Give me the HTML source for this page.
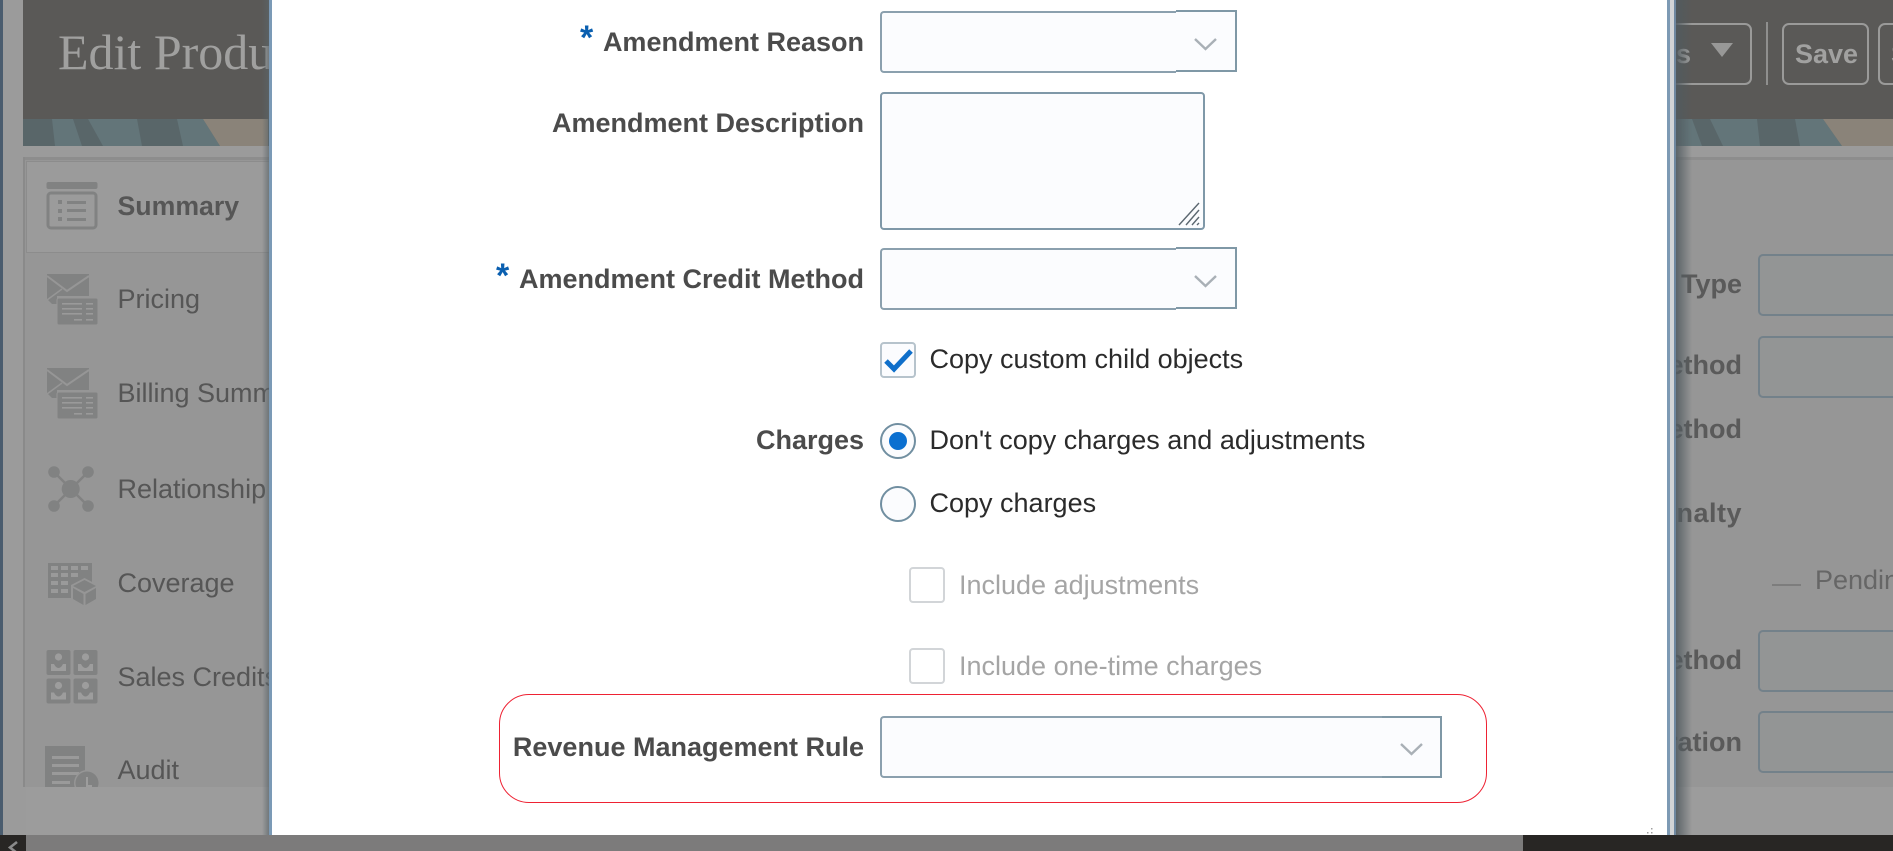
<!DOCTYPE html>
<html lang="en">
<head>
<meta charset="utf-8">
<title>Edit Product</title>
<style>
html,body{margin:0;padding:0}
body{width:1893px;height:851px;overflow:hidden;position:relative;background:#9b9b9b;font-family:"Liberation Sans",sans-serif}
.a{position:absolute}
.t{position:absolute;font-size:27px;line-height:30px;white-space:nowrap}
.b{font-weight:bold}
.r{text-align:right}
.nav{left:117.5px;color:#565656}
.bg{color:#5a5a5a;font-weight:bold;width:300px;left:1442px;text-align:right}
.fld{position:absolute;left:1758px;width:200px;height:58px;background:#939595;border:2px solid #73818a;border-radius:5px}
.btn{position:absolute;box-sizing:border-box;border:2px solid #9a9a99;border-radius:7px;height:62px;top:23px}
.l{color:#4b4b4b;font-weight:bold;text-align:right;left:364px;width:500px}
.v{color:#2b2b2b;left:929.5px}
.d{color:#a5a5a5;left:959px}
.sel{position:absolute;left:880px;box-sizing:border-box;height:62px;background:#fbfcfe;border:2px solid #8ba0ae;border-right:0;border-radius:4px 0 0 4px}
.trg{position:absolute;box-sizing:border-box;height:62px;background:#fbfcfe;border:2px solid #7f98a6;border-left:0}
.box{position:absolute;box-sizing:border-box;width:36px;height:36px;border-radius:4px}
.rad{position:absolute;box-sizing:border-box;width:36px;height:36px;left:880px;border-radius:50%;border:2px solid #718fa1;background:#fbfcfe}
.star{position:absolute;color:#0a5fb0;font-weight:bold;font-size:34px;line-height:34px}
</style>
</head>
<body>
<!-- page background -->
<div class="a" style="left:0;top:0;width:3px;height:835px;background:#4a5c6e"></div>
<div class="a" style="left:23px;top:0;width:1870px;height:119px;background:#5a5957"></div>
<svg class="a" style="left:23px;top:119px" width="1870" height="27" viewBox="0 0 1870 27">
<rect width="1870" height="27" fill="#596669"/>
<polygon points="29,0 50,0 59,27 32,27" fill="#637579"/>
<polygon points="65,0 114,0 119,27 80,27" fill="#637579"/>
<polygon points="154,0 180,0 197,27 160,27" fill="#637579"/>
<polygon points="180,0 245,0 245,27 197,27" fill="#8a8379"/>
<polygon points="1640,0 1669,0 1679,27 1640,27" fill="#637579"/>
<polygon points="1687,0 1734,0 1737,27 1700,27" fill="#637579"/>
<polygon points="1772,0 1800,0 1819,27 1777,27" fill="#637579"/>
<polygon points="1800,0 1870,0 1870,27 1819,27" fill="#8a8379"/>
</svg>
<div class="a" style="left:23px;top:157px;width:1870px;height:630px;background:#969696"></div>
<div class="a" style="left:23px;top:157px;width:1870px;height:3px;background:#8d8d8d"></div>
<div class="a" style="left:23px;top:157px;width:2px;height:630px;background:#8a8a8a"></div>
<div class="a" style="left:26px;top:161px;width:300px;height:90px;background:#9b9b9b;border:1px solid #8c8c8c"></div>

<div class="t" style="left:58px;top:25px;font-family:'Liberation Serif',serif;font-size:50px;line-height:54px;color:#a0a09f">Edit Product</div>

<!-- nav -->
<div class="t nav b" style="top:191px;font-size:26.7px">Summary</div>
<div class="t nav" style="top:284px">Pricing</div>
<div class="t nav" style="top:378px">Billing Summary</div>
<div class="t nav" style="top:474px">Relationship</div>
<div class="t nav" style="top:568px">Coverage</div>
<div class="t nav" style="top:662px">Sales Credits</div>
<div class="t nav" style="top:755px">Audit</div>

<svg class="a" style="left:40px;top:175px" width="65" height="612" viewBox="40 175 65 612">
<g fill="#818282">
<rect x="46.5" y="182" width="51" height="7" rx="2"/>
<rect x="48" y="193" width="48" height="35" rx="3" fill="none" stroke="#818282" stroke-width="3"/>
<rect x="58" y="200" width="4" height="4"/><rect x="58" y="209" width="4" height="4"/><rect x="58" y="217" width="4" height="4"/>
<rect x="67" y="201" width="19" height="3"/><rect x="67" y="209" width="19" height="3"/><rect x="67" y="218" width="19" height="3"/>
</g>
<defs>
<g id="m">
<polygon points="47,274 89,274 89,296 57,296 57,304 52,304 47,299" fill="#818282"/>
<path d="M47 276 L67 291 L89 276" fill="none" stroke="#969696" stroke-width="2"/>
<path d="M47 300 L62 289" fill="none" stroke="#969696" stroke-width="1.5"/>
<rect x="57" y="298" width="41" height="27" rx="2" fill="#818282" stroke="#969696" stroke-width="1"/>
<g fill="#9a9a9a"><rect x="62" y="303" width="20" height="1.6"/><rect x="86" y="303" width="7" height="1.6"/><rect x="62" y="308" width="20" height="1.6"/><rect x="86" y="308" width="7" height="1.6"/><rect x="62" y="313" width="20" height="1.6"/><rect x="86" y="313" width="7" height="1.6"/><rect x="74" y="319" width="8" height="1.6"/><rect x="86" y="319" width="7" height="1.6"/></g>
</g>
</defs>
<use href="#m"/>
<use href="#m" y="94"/>
<g fill="#818282" stroke="#818282">
<path d="M54 472 L88 506 M88 472 L54 506" stroke-width="2.5" fill="none"/>
<circle cx="70.7" cy="489" r="9" stroke="none"/>
<circle cx="54" cy="472" r="5.8" stroke="none"/><circle cx="88" cy="472" r="5.8" stroke="none"/>
<circle cx="54" cy="506" r="5.8" stroke="none"/><circle cx="88" cy="506" r="5.8" stroke="none"/>
</g>
<rect x="48" y="563" width="44" height="35" fill="#818282"/>
<g fill="#9a9a9a">
<rect x="51" y="566" width="7" height="4"/><rect x="61" y="566" width="7" height="4"/><rect x="71" y="566" width="7" height="4"/><rect x="81" y="566" width="7" height="4"/>
<rect x="51" y="573" width="7" height="4"/><rect x="61" y="573" width="7" height="4"/><rect x="71" y="573" width="7" height="4"/>
<rect x="51" y="581" width="7" height="4"/><rect x="61" y="581" width="7" height="4"/>
<rect x="51" y="589" width="7" height="4"/><rect x="61" y="589" width="7" height="4"/>
</g>
<polygon points="84.5,578 98,585 98,600 84.5,607 71,600 71,585" fill="#969696"/>
<polygon points="84.5,580 96,586 84.5,592 73,586" fill="#818282"/>
<polygon points="73,588 83.5,594 83.5,605 73,599" fill="#818282"/>
<polygon points="96,588 85.5,594 85.5,605 96,599" fill="#818282"/>
<defs>
<g id="p">
<rect x="46.5" y="650" width="24" height="25" rx="2" fill="#818282"/>
<circle cx="58.5" cy="657" r="3.6" fill="#9d9d9d"/>
<path d="M51 664 H54 Q56 668 58.5 668 Q61 668 63 664 H66 V671 H51 Z" fill="#9d9d9d"/>
</g>
</defs>
<use href="#p"/><use href="#p" x="27"/><use href="#p" y="28.5"/><use href="#p" x="27" y="28.5"/>
<rect x="45" y="746" width="40" height="41" fill="#818282"/>
<g fill="#9a9a9a"><rect x="52" y="756" width="27" height="3"/><rect x="52" y="764" width="27" height="3"/><rect x="52" y="772" width="27" height="3"/><rect x="52" y="781" width="18" height="3"/></g>
<circle cx="87" cy="783" r="13" fill="#969696"/>
<circle cx="87" cy="783" r="11.5" fill="#818282"/>
<path d="M87 777 V786 H92" stroke="#9d9d9d" stroke-width="2" fill="none"/>
</svg>
<div class="a" style="left:26px;top:787px;width:1867px;height:48px;background:#9c9c9c"></div>

<!-- right side header -->
<div class="btn" style="left:1560px;width:192px"></div>
<div class="t b" style="left:1560px;width:131px;top:39px;text-align:right;color:#a1a1a0">Actions</div>
<svg class="a" style="left:1711px;top:43px" width="22" height="14"><polygon points="0,0 22,0 11,14" fill="#989897"/></svg>
<div class="a" style="left:1766px;top:22px;width:2px;height:63px;background:#8f8f8e"></div>
<div class="btn" style="left:1782px;width:87px"></div>
<div class="t b" style="left:1795px;top:39px;color:#a1a1a0">Save</div>
<div class="btn" style="left:1878px;width:100px"></div>
<div class="t b" style="left:1891px;top:39px;color:#a1a1a0">Save</div>

<!-- right side form -->
<div class="t bg" style="top:269px">Type</div>
<div class="fld" style="top:254px"></div>
<div class="t bg" style="top:350px">Method</div>
<div class="fld" style="top:336px"></div>
<div class="t bg" style="top:414px">Method</div>
<div class="t bg" style="top:498px;letter-spacing:.5px">Penalty</div>
<div class="a" style="left:1772px;top:584px;width:29px;height:2px;background:#7d7d7d"></div>
<div class="t" style="left:1815px;top:565px;color:#666">Pending</div>
<div class="t bg" style="top:645px">Method</div>
<div class="fld" style="top:630px"></div>
<div class="t bg" style="top:727px">Duration</div>
<div class="fld" style="top:711px"></div>

<!-- dialog shadow -->
<div class="a" style="left:262px;top:0;width:8px;height:835px;background:linear-gradient(90deg,rgba(90,100,105,0),rgba(90,100,105,.75))"></div>
<div class="a" style="left:1676px;top:0;width:16px;height:835px;background:linear-gradient(90deg,rgba(80,90,95,.85),rgba(80,90,95,0))"></div>
<!-- dialog -->
<div class="a" style="left:269px;top:0;width:3px;height:835px;background:#7b9ab6"></div>
<div class="a" style="left:272px;top:0;width:1395px;height:835px;background:#fff"></div>
<div class="a" style="left:1667px;top:0;width:3px;height:835px;background:#7d9ab4"></div>
<div class="a" style="left:1670px;top:0;width:4px;height:835px;background:#d2d4d6"></div>
<div class="a" style="left:1674px;top:0;width:2px;height:835px;background:#6f88a0"></div>

<div class="star" style="left:580px;top:21px">*</div>
<div class="t l" style="top:27px">Amendment Reason</div>
<div class="sel" style="top:11px;width:296px"></div>
<div class="trg" style="left:1176px;top:10px;width:61px"></div>
<svg class="a" style="left:1193px;top:37px" width="25" height="14"><path d="M2 2 L12.5 12 L23 2" fill="none" stroke="#a9b0b6" stroke-width="2.4"/></svg>

<div class="t l" style="top:108px">Amendment Description</div>
<div class="a" style="left:880px;top:92px;width:321px;height:134px;background:#fbfcfe;border:2px solid #7f98a8;border-radius:4px"></div>
<svg class="a" style="left:1177px;top:202px" width="24" height="24"><path d="M2 23 L22 1 M9 23 L22 8 M15 23 L22 15 M20 23 L22 21" stroke="#5b6770" stroke-width="1.4" fill="none"/></svg>

<div class="star" style="left:496px;top:259px">*</div>
<div class="t l" style="top:264px">Amendment Credit Method</div>
<div class="sel" style="top:248px;width:296px"></div>
<div class="trg" style="left:1176px;top:247px;width:61px"></div>
<svg class="a" style="left:1193px;top:274px" width="25" height="14"><path d="M2 2 L12.5 12 L23 2" fill="none" stroke="#a9b0b6" stroke-width="2.4"/></svg>

<div class="box" style="left:880px;top:342px;border:2px solid #b6c3cc;background:#fbfcfe"></div>
<svg class="a" style="left:880px;top:342px" width="36" height="36"><path d="M6 19 L14 27 L31 9" fill="none" stroke="#0f6fca" stroke-width="5"/></svg>
<div class="t v" style="top:344px">Copy custom child objects</div>

<div class="t l" style="top:425px">Charges</div>
<div class="rad" style="top:423px"></div>
<div class="a" style="left:889px;top:432px;width:18px;height:18px;border-radius:50%;background:#0a6fd0"></div>
<div class="t v" style="top:425px">Don't copy charges and adjustments</div>
<div class="rad" style="top:486px"></div>
<div class="t v" style="top:488px">Copy charges</div>

<div class="box" style="left:909px;top:567px;border:2px solid #d2d5d8"></div>
<div class="t d" style="top:570px">Include adjustments</div>
<div class="box" style="left:909px;top:648px;border:2px solid #d2d5d8"></div>
<div class="t d" style="top:651px">Include one-time charges</div>

<div class="a" style="left:499px;top:694px;width:986px;height:107px;border:1px solid #ee2233;border-radius:30px"></div>
<div class="t l" style="top:732px">Revenue Management Rule</div>
<div class="sel" style="top:716px;width:502px"></div>
<div class="trg" style="left:1382px;top:716px;width:60px"></div>
<svg class="a" style="left:1399px;top:742px" width="25" height="14"><path d="M2 2 L12.5 12 L23 2" fill="none" stroke="#a9b0b6" stroke-width="2.4"/></svg>

<svg class="a" style="left:1646px;top:826px" width="10" height="9"><g fill="#a0a0a0"><rect x="5" y="2" width="1.5" height="1.5"/><rect x="5" y="6" width="1.5" height="1.5"/><rect x="1" y="6" width="1.5" height="1.5"/></g></svg>

<!-- bottom bar -->
<div class="a" style="left:0;top:835px;width:1893px;height:16px;background:#282624"></div>
<div class="a" style="left:26px;top:835px;width:1497px;height:16px;background:#7c7b7b"></div>
<svg class="a" style="left:6px;top:841px" width="14" height="10"><path d="M11 1 L4 6.5 L11 12" fill="none" stroke="#8a8a8a" stroke-width="2.6"/></svg>
</body>
</html>
